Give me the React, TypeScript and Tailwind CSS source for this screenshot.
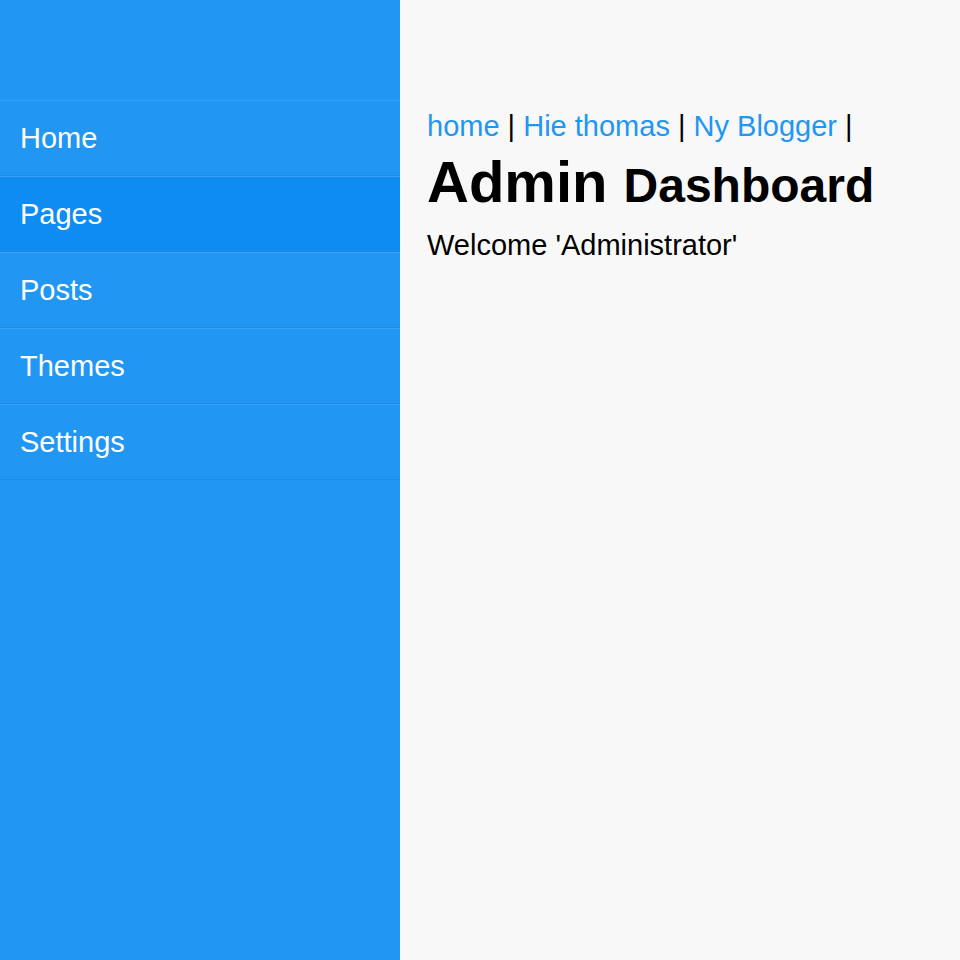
import React from 'react';

const navItems = ['Home', 'Pages', 'Posts', 'Themes', 'Settings'];
const activeItem = 'Pages';

const crumbs = ['home', 'Hie thomas', 'Ny Blogger'];

const Sidebar = () => {
  return (
    <aside className="w-[400px] shrink-0 bg-[#2196f3] pt-[100px]">
      <ul>
        {navItems.map((item) => (
          <li
            key={item}
            className={
              'border-t border-b border-t-[#3aa0f5] border-b-[#1a8cef] px-5 text-[29px] leading-[74px] text-white ' +
              (item === activeItem ? 'bg-[#0e8cf2]' : '')
            }
          >
            <a href="#">{item}</a>
          </li>
        ))}
      </ul>
    </aside>
  );
};

const App = () => {
  return (
    <div
      className="flex min-h-[960px] w-full bg-[#f8f8f8]"
      style={{ fontFamily: '"Liberation Sans", Arial, sans-serif' }}
    >
      <Sidebar />
      <main className="flex-1 pl-[27px] pt-[110px] text-black">
        <div className="text-[29px] leading-[32px]">
          {crumbs.map((c) => (
            <React.Fragment key={c}>
              <a href="#" className="text-[#2196f3]">
                {c}
              </a>{' '}
              |{' '}
            </React.Fragment>
          ))}
        </div>
        <h1 className="mt-[8px] text-[58px] font-bold leading-[64px]">
          Admin <small className="text-[48px]">Dashboard</small>
        </h1>
        <p className="mt-[11px] text-[29px] leading-[32px]">Welcome 'Administrator'</p>
      </main>
    </div>
  );
};

export default App;
